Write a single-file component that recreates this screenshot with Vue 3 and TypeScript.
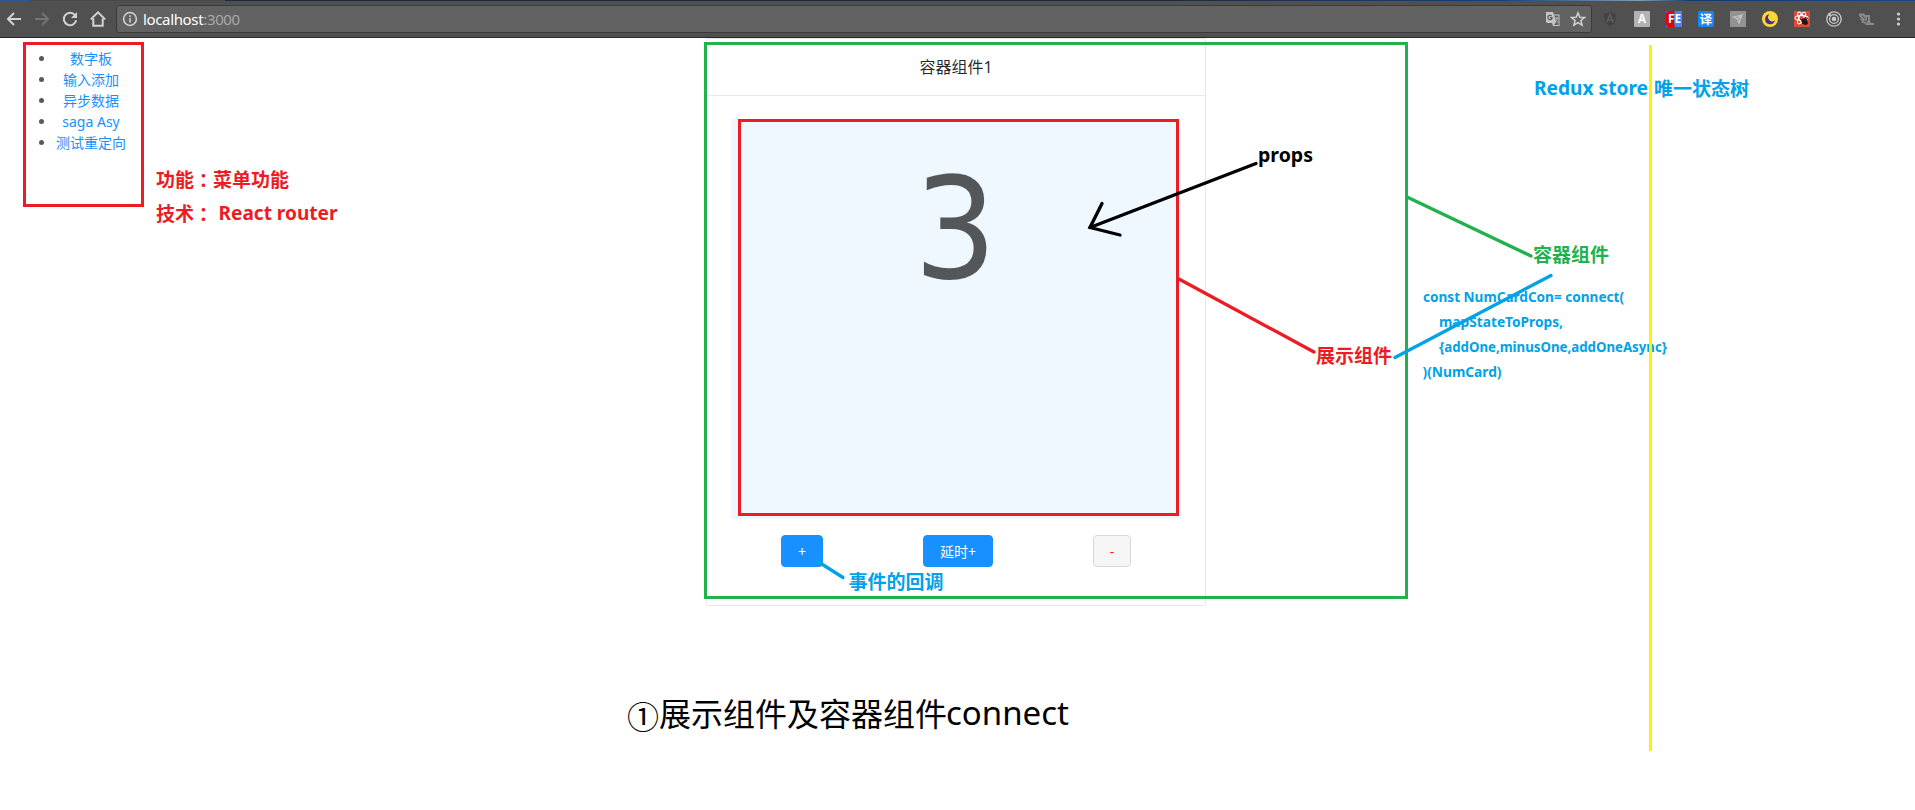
<script setup lang="ts">
interface Link { label: string; href: string }
interface Segment { points: string; color: string }
interface Note { text: string; x: number; y: number; width: number; size: number; color: string; bold: boolean }

const links: Link[] = [
  { label: '数字板', href: '#num' },
  { label: '输入添加', href: '#input' },
  { label: '异步数据', href: '#async' },
  { label: 'saga Asy', href: '#saga' },
  { label: '测试重定向', href: '#redirect' },
]

const RED = '#ed1c24'
const GREEN = '#22b14c'
const BLUE = '#00a2e8'
const BLACK = '#000000'

const segments: Segment[] = [
  { points: '1256,163.5 1090,227.5', color: BLACK },
  { points: '1102,203.5 1090,227.5 1120,235', color: BLACK },
  { points: '1178,278.5 1314,352', color: RED },
  { points: '1408,197.5 1531,256', color: GREEN },
  { points: '1395,357.5 1551,275.5', color: BLUE },
  { points: '817,561 843,577.5', color: BLUE },
]

const notes: Note[] = [
  { text: '功能', x: 156, y: 187, width: 38, size: 19, color: RED, bold: true },
  { text: '：', x: 194, y: 188, width: 19, size: 19, color: RED, bold: true },
  { text: '菜单功能', x: 213, y: 187, width: 76, size: 19, color: RED, bold: true },
  { text: '技术', x: 156, y: 221, width: 38, size: 19, color: RED, bold: true },
  { text: '：', x: 194, y: 222, width: 19, size: 19, color: RED, bold: true },
  { text: 'React router', x: 218.5, y: 220, width: 119, size: 19, color: RED, bold: true },
  { text: 'props', x: 1258, y: 162, width: 55, size: 19, color: BLACK, bold: true },
  { text: '展示组件', x: 1316, y: 363, width: 76, size: 19, color: RED, bold: true },
  { text: '容器组件', x: 1533, y: 262, width: 76, size: 19, color: GREEN, bold: true },
  { text: '事件的回调', x: 848.5, y: 589, width: 95, size: 19, color: BLUE, bold: true },
  { text: 'Redux store', x: 1534, y: 95, width: 114, size: 19, color: BLUE, bold: true },
  { text: '唯一状态树', x: 1654, y: 96, width: 95, size: 19, color: BLUE, bold: true },
  { text: 'const NumCardCon= connect(', x: 1423, y: 302, width: 201, size: 14, color: BLUE, bold: true },
  { text: 'mapStateToProps,', x: 1439, y: 327, width: 124, size: 14, color: BLUE, bold: true },
  { text: '{addOne,minusOne,addOneAsync}', x: 1439, y: 352, width: 228, size: 14, color: BLUE, bold: true },
  { text: ')(NumCard)', x: 1422.5, y: 377, width: 79, size: 14, color: BLUE, bold: true },
  { text: '①', x: 627, y: 728.5, width: 32, size: 32, color: BLACK, bold: false },
  { text: '展示组件及容器组件', x: 659, y: 725.5, width: 288, size: 32, color: BLACK, bold: false },
  { text: 'connect', x: 946, y: 724.5, width: 123, size: 32, color: BLACK, bold: false },
]
</script>

<template>
  <div class="window">
    <header class="toolbar">
      <nav class="nav">
        <svg viewBox="0 0 16 16" class="ico"><path d="M15 8H2.500M8 2 2 8l6 6" /></svg>
        <svg viewBox="0 0 16 16" class="ico dim"><path d="M1 8h12.500M8 2l6 6-6 6" /></svg>
        <svg viewBox="0 0 16 16" class="ico"><path d="M13 4.200A6.200 6.200 0 1 0 14.200 9.300" /><path d="M15 1v6H9z" class="fill" /></svg>
        <svg viewBox="0 0 16 16" class="ico"><path d="M.8 8.400 8 1.300l7.200 7.100M3.300 7.500v7.200h9.400V7.500" /></svg>
      </nav>
      <div class="omnibox">
        <svg viewBox="0 0 16 16" class="info"><circle cx="8" cy="8" r="6.400" /><path d="M8 7v4.500M8 4.200v1.700" /></svg>
        <span class="host">localhost</span><span class="port">:3000</span>
        <span class="grow"></span>
        <svg viewBox="0 0 16 16" class="translate">
          <path d="M1 1h7l1 2.500h5.500V15H8l-1-3H2l-1-1z" fill="#c4c4c4" />
          <path d="M9.300 4.500h4.200V14H9l2-2.500z" fill="#626262" />
          <path d="M9.500 7h4M12.300 7c0 2-1.500 3.300-2.300 4M10.700 8.500c.5 1.500 1.500 2 2.500 3" fill="none" stroke="#c4c4c4" />
          <path d="M6.700 5A2.200 2.200 0 1 0 7 7.500V6.600H5" fill="none" stroke="#555" stroke-width="1.200" />
        </svg>
        <svg viewBox="0 0 16 16" class="star"><path d="m8 1.800 1.800 4.400 4.700.3-3.600 3 1.200 4.600L8 11.600l-4.100 2.500 1.200-4.600-3.600-3 4.700-.3z" /></svg>
      </div>
      <div class="extensions">
        <svg viewBox="0 0 16 16"><path d="M8 1 2 3l1 9 5 3 5-3 1-9z" fill="#434343" /><path d="M4.500 11.500 8 3.500l3.500 8M6 9h4" fill="none" stroke="#606060" stroke-width="1.500" /></svg>
        <svg viewBox="0 0 16 16"><rect width="16" height="16" rx="1" fill="#b3b3b3" /><text x="8" y="12.200" class="glyph" font-size="11.500">A</text></svg>
        <svg viewBox="0 0 16 16"><rect width="16" height="16" fill="#4285f4" /><path d="M0 2 2 0h7L8 3v10l1 3H2l-2-2z" fill="#e60000" /><text x="8.500" y="12.300" class="glyph" font-size="12" textLength="13" lengthAdjust="spacingAndGlyphs">FE</text></svg>
        <svg viewBox="0 0 16 16"><rect width="16" height="16" rx="2" fill="#1687f7" /><text x="8" y="12.500" class="glyph" font-size="12.500">译</text></svg>
        <svg viewBox="0 0 16 16"><rect width="16" height="16" fill="#929292" /><path d="M3.500 6 12 4 9 12 7.500 8zM7.500 8 12 4" fill="none" stroke="#c4c4c4" stroke-width="1.200" /></svg>
        <svg viewBox="0 0 16 16"><circle cx="8" cy="8" r="8" fill="#fdd835" /><path d="M7.500 3.200A5 5 0 1 0 13 9.200 4 4 0 0 1 7.500 3.200z" fill="#41308c" /></svg>
        <svg viewBox="0 0 16 16">
          <rect width="16" height="16" fill="#db4a39" />
          <g fill="none" stroke="#fff" stroke-width="1.100"><ellipse cx="7.500" cy="7" rx="6.500" ry="2.500" /><ellipse cx="7.500" cy="7" rx="6.500" ry="2.500" transform="rotate(60 7.500 7)" /><ellipse cx="7.500" cy="7" rx="6.500" ry="2.500" transform="rotate(120 7.500 7)" /></g>
          <ellipse cx="10.500" cy="10.500" rx="2.800" ry="3.500" fill="#2a1512" transform="rotate(-35 10.500 10.500)" /><path d="m6 8 8 5M8 13l6-6M11 6l1 8" stroke="#2a1512" />
        </svg>
        <svg viewBox="0 0 16 16"><g fill="none" stroke="#c9c9c9" stroke-width="1.300"><circle cx="8" cy="8" r="7.200" /><circle cx="8" cy="8" r="4.400" /></g><circle cx="8" cy="8" r="2.300" fill="#c9c9c9" /><circle cx="3.500" cy="3.500" r="1.500" fill="#c9c9c9" /></svg>
        <svg viewBox="0 0 16 16"><path d="M1 2.500h5L7.500 4H12v6.500L13.500 12H16v2H8l-2-2H3.500v-1.500H5L1.500 8H4L1 5z" fill="#8a8a8a" /><path d="M3.500 4.500 7.500 8M6 10h3.500V6M9 12.500l-1.500-2" stroke="#505050" fill="none" /></svg>
        <svg viewBox="0 0 16 16"><g fill="#d0d0d0"><circle cx="8.500" cy="3" r="1.600" /><circle cx="8.500" cy="8" r="1.600" /><circle cx="8.500" cy="13" r="1.600" /></g></svg>
      </div>
    </header>

    <main class="page">
      <aside class="menu">
        <ul>
          <li v-for="link in links" :key="link.href"><a :href="link.href">{{ link.label }}</a></li>
        </ul>
      </aside>
      <section class="card">
        <h3 class="card-head">容器组件1</h3>
        <div class="card-body">
          <div class="display"><span class="number">3</span></div>
          <div class="actions">
            <button class="btn primary">+</button>
            <button class="btn primary">延时+</button>
            <button class="btn danger">-</button>
          </div>
        </div>
      </section>
    </main>

    <svg class="annotations" viewBox="0 0 1915 810" width="1915" height="810">
      <g fill="none" stroke-width="3">
        <rect x="24.500" y="43.500" width="118" height="162" :stroke="RED" />
        <rect x="705.500" y="43.500" width="701" height="554" :stroke="GREEN" />
        <rect x="739.500" y="120.500" width="438" height="394" :stroke="RED" />
      </g>
      <g fill="none" stroke-width="3.300" stroke-linecap="round">
        <polyline v-for="s in segments" :key="s.points" :points="s.points" :stroke="s.color" />
      </g>
      <text
        v-for="n in notes"
        :key="n.text + n.y"
        :x="n.x"
        :y="n.y"
        :font-size="n.size"
        :fill="n.color"
        :textLength="n.width"
        :class="{ bold: n.bold, centred: n.text === '：' }"
        lengthAdjust="spacingAndGlyphs"
      >{{ n.text }}</text>
      <path d="M1650.500 45v706" stroke="#fff200" stroke-width="3" />
    </svg>
  </div>
</template>

<style>
body {
  margin: 0;
  background: #fff;
}
</style>

<style scoped>
.window {
  position: relative;
  width: 1915px;
  height: 810px;
  overflow: hidden;
  background: #fff;
  font-family: "Noto Sans", "Noto Sans CJK SC", sans-serif;
  font-size: 14px;
  color: rgba(0, 0, 0, 0.65);
}
.toolbar {
  box-sizing: border-box;
  height: 38px;
  padding-top: 1px;
  display: flex;
  align-items: center;
  background:
    linear-gradient(90deg, #2a5699 0 30px, #4a4a4a 30px 225px, #1d2c42 225px 1180px, #17407a 1500px, #7f9fb4 1640px, #12396d 1690px, #164a85) 0 0 / 100% 1px no-repeat,
    #505050;
  border-bottom: 1px solid #282828;
}
.nav {
  width: 116px;
  box-sizing: border-box;
  padding-left: 6px;
  display: flex;
  gap: 12px;
}
.ico {
  width: 16px;
  height: 16px;
  fill: none;
  stroke: #d2d2d2;
  stroke-width: 2;
}
.ico .fill {
  fill: #d2d2d2;
  stroke: none;
}
.ico.dim {
  stroke: #757575;
}
.omnibox {
  box-sizing: border-box;
  width: 1476px;
  height: 28px;
  display: flex;
  align-items: center;
  padding: 0 5px;
  background: #626262;
  border: 1px solid #3b3b3b;
  border-radius: 3px;
  font-size: 15px;
  letter-spacing: -0.35px;
}
.info {
  width: 16px;
  height: 16px;
  margin-right: 5px;
  fill: none;
  stroke: #d6d6d6;
  stroke-width: 1.500;
}
.host {
  color: #fff;
}
.port {
  color: #a9a9a9;
}
.grow {
  flex: 1;
}
.translate {
  width: 16px;
  height: 16px;
  margin-right: 9px;
}
.star {
  width: 16px;
  height: 16px;
  fill: none;
  stroke: #d2d2d2;
  stroke-width: 1.500;
}
.extensions {
  display: flex;
  gap: 16px;
  padding-left: 10px;
}
.extensions svg {
  width: 16px;
  height: 16px;
}
.glyph {
  fill: #fff;
  font-weight: 700;
  text-anchor: middle;
}
.page {
  display: flex;
  align-items: flex-start;
}
.menu {
  width: 706px;
}
.menu ul {
  margin: 10px 0 0;
  padding-left: 39px;
  list-style: none;
}
.menu li {
  display: flex;
  align-items: center;
  height: 21px;
  line-height: 21px;
}
.menu li::before {
  content: "";
  width: 5px;
  height: 5px;
  border-radius: 50%;
  background: rgba(0, 0, 0, 0.65);
}
.menu a {
  width: 80px;
  margin-left: 7px;
  text-align: center;
  color: #1890ff;
  text-decoration: none;
}
.card {
  box-sizing: border-box;
  width: 500px;
  height: 568px;
  border: 1px solid #e8e8e8;
  border-radius: 2px;
}
.card-head {
  box-sizing: border-box;
  margin: 0;
  height: 57px;
  border-bottom: 1px solid #e8e8e8;
  text-align: center;
  font-size: 16px;
  font-weight: 400;
  line-height: 57px;
  color: rgba(0, 0, 0, 0.85);
}
.card-body {
  padding: 23px 24px;
}
.display {
  height: 400px;
  background: #f0f8ff;
  text-align: center;
}
.number {
  display: inline-block;
  font-family: "DejaVu Sans", sans-serif;
  font-size: 140px;
  line-height: 221px;
  transform: scaleX(0.93);
}
.actions {
  display: flex;
  justify-content: space-around;
  margin-top: 16px;
}
.btn {
  height: 32px;
  padding: 0 15px;
  border: 1px solid #1890ff;
  border-radius: 4px;
  font: inherit;
  white-space: nowrap;
}
.primary {
  width: 42px;
  padding: 0;
  background: #1890ff;
  color: #fff;
}
.primary + .primary {
  width: 70px;
}
.danger {
  width: 38px;
  background: #f5f5f5;
  border-color: #d9d9d9;
  color: #f5222d;
}
.annotations {
  position: absolute;
  top: 0;
  left: 0;
  pointer-events: none;
}
.annotations text {
  font-family: "Noto Sans", "Noto Sans CJK SC", sans-serif;
}
.annotations .bold {
  font-weight: 700;
}
.annotations .centred {
  font-family: "Noto Sans CJK JP", sans-serif;
}
</style>
